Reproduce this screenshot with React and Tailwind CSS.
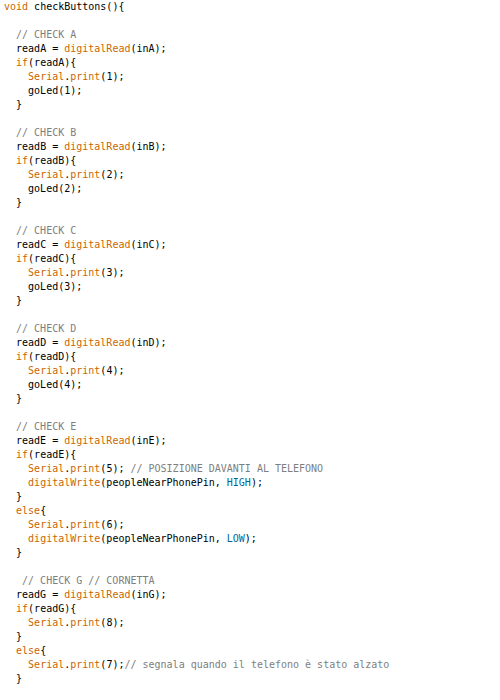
import React from 'react';

// token colours used by the Arduino IDE theme
const K = ({ children }) => <span className="text-[#cc6600]">{children}</span>;
const C = ({ children }) => <span className="text-[#7e7e7e]">{children}</span>;
const B = ({ children }) => <span className="text-[#006699]">{children}</span>;

const checkBlock = (letter, n) => [
  <C>  // CHECK {letter}</C>,
  <>  read{letter} = <K>digitalRead</K>(in{letter});</>,
  <>  <K>if</K>(read{letter}){'{'}</>,
  <>    <K>Serial</K>.<K>print</K>({n});</>,
  <>    goLed({n});</>,
  <>  {'}'}</>,
  '',
];

const lines = [
  <><K>void</K> checkButtons(){'{'}</>,
  '',
  ...checkBlock('A', 1),
  ...checkBlock('B', 2),
  ...checkBlock('C', 3),
  ...checkBlock('D', 4),
  <C>  // CHECK E</C>,
  <>  readE = <K>digitalRead</K>(inE);</>,
  <>  <K>if</K>(readE){'{'}</>,
  <>    <K>Serial</K>.<K>print</K>(5); <C>// POSIZIONE DAVANTI AL TELEFONO</C></>,
  <>    <K>digitalWrite</K>(peopleNearPhonePin, <B>HIGH</B>);</>,
  <>  {'}'}</>,
  <>  <K>else</K>{'{'}</>,
  <>    <K>Serial</K>.<K>print</K>(6);</>,
  <>    <K>digitalWrite</K>(peopleNearPhonePin, <B>LOW</B>);</>,
  <>  {'}'}</>,
  '',
  <C>   // CHECK G // CORNETTA</C>,
  <>  readG = <K>digitalRead</K>(inG);</>,
  <>  <K>if</K>(readG){'{'}</>,
  <>    <K>Serial</K>.<K>print</K>(8);</>,
  <>  {'}'}</>,
  <>  <K>else</K>{'{'}</>,
  <>    <K>Serial</K>.<K>print</K>(7);<C>// segnala quando il telefono è stato alzato</C></>,
  <>  {'}'}</>,
];

export default function App() {
  return (
    <div className="w-[500px] h-[700px] bg-white overflow-hidden pl-1 text-black text-[10px] font-['DejaVu_Sans_Mono',monospace]">
      {lines.map((line, i) => (
        <div key={i} className="h-[14px] leading-[14px] whitespace-pre">
          {line}
        </div>
      ))}
    </div>
  );
}
